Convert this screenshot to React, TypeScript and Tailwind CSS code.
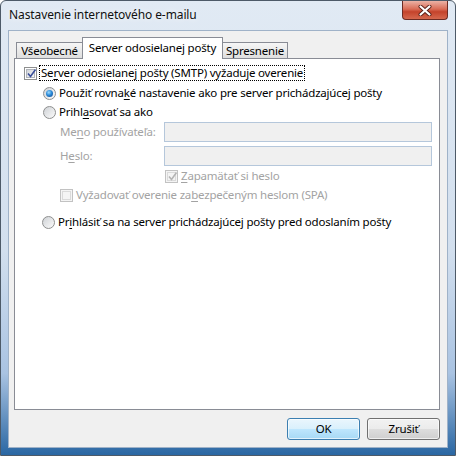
import React from "react";
import clsx from "clsx";

const Check = ({ checked = false, disabled = false }) => (
  <span
    className={clsx(
      "relative w-[13px] h-[13px] border flex items-center justify-center shrink-0",
      disabled ? "border-[#c2c2c2] bg-[#f4f4f4]" : "border-[#8e8f8f] bg-white"
    )}
  >
    <span
      className={clsx(
        "w-[9px] h-[9px] border",
        disabled
          ? "border-[#dadada] bg-[#f4f4f4]"
          : "border-[#b0b4ba] bg-[linear-gradient(135deg,#d2d5da,#f7f7f7)]"
      )}
    />
    {checked && (
      <svg className="absolute left-[1px] top-[0px]" width="11" height="11" viewBox="0 0 11 11">
        <path
          d="M2 5.5 L4.5 8.5 L9.5 1.5"
          fill="none"
          stroke={disabled ? "#b4b4b4" : "#3a4f9a"}
          strokeWidth="1.6"
        />
      </svg>
    )}
  </span>
);

const Radio = ({ checked = false }) => (
  <span className="w-[13px] h-[13px] rounded-full border border-[#8e8f8f] bg-[linear-gradient(135deg,#cfd2d6,#fbfbfb)] flex items-center justify-center shrink-0">
    {checked && (
      <span className="w-[7px] h-[7px] rounded-full bg-[radial-gradient(circle_at_40%_35%,#9fdcff_0%,#2b8ad8_45%,#0d3f86_100%)]" />
    )}
  </span>
);

const U = ({ children }) => <span className="underline underline-offset-[2px]">{children}</span>;

export default function App() {
  return (
    <div className="w-[456px] h-[456px] flex flex-col border border-[#4d5a68] rounded-t-[6px] bg-[linear-gradient(to_bottom,#e1eaf4_0%,#d2dfee_55%,#a9c3e2_82%,#2a67a3_100%)] font-['Noto_Sans',sans-serif] text-[11.5px] tracking-[-0.2px] text-black leading-none overflow-hidden">
      {/* title bar */}
      <div className="h-[29px] flex justify-between items-start pl-[8px] pr-[7px]">
        <div className="mt-[8px] text-[12px] tracking-[-0.1px] text-[#111] [text-shadow:0_0_6px_#ffffff]">
          Nastavenie internetového e-mailu
        </div>
        <div className="w-[46px] h-[19px] border border-t-0 border-[#6b2b23] rounded-b-[4px] bg-[linear-gradient(to_bottom,#ebb2a5_0%,#d96c56_45%,#c4432b_60%,#d5684e_100%)] flex items-center justify-center">
          <svg width="14" height="11" viewBox="0 0 14 11">
            <path d="M2.5 1.5 L11.5 9.5 M11.5 1.5 L2.5 9.5" stroke="#5a2018" strokeWidth="4" strokeLinecap="round" />
            <path d="M2.5 1.5 L11.5 9.5 M11.5 1.5 L2.5 9.5" stroke="#ffffff" strokeWidth="2.2" strokeLinecap="round" />
          </svg>
        </div>
      </div>

      {/* client area */}
      <div className="flex-1 mx-[7px] mb-[7px] border border-[#9fb2c8] bg-[#f0f0f0] flex flex-col pl-[5px] pt-[6px]">
        {/* tabs */}
        <div className="relative z-10 flex items-end h-[21px] pl-[2px]">
          <div className="w-[67px] h-[16px] border border-b-0 border-[#898c95] bg-[linear-gradient(to_bottom,#f6f6f6,#dedede)] flex items-center justify-center">
            Všeobecné
          </div>
          <div className="w-[141px] h-[22px] -mb-px -ml-px border border-b-0 border-[#898c95] bg-white flex items-center justify-center pb-[2px]">
            Server odosielanej pošty
          </div>
          <div className="w-[66px] h-[16px] -ml-px border border-b-0 border-[#898c95] bg-[linear-gradient(to_bottom,#f6f6f6,#dedede)] flex items-center justify-center">
            Spresnenie
          </div>
        </div>

        {/* panel */}
        <div className="w-[426px] h-[352px] border border-[#898c95] bg-white flex flex-col">
          <div className="mt-[6px] h-[16px] flex items-center pl-[9px]">
            <Check checked />
            <span className="ml-[2px] border border-dotted border-black px-[1px] py-[1px]">
              Se<U>r</U>ver odosielanej pošty (SMTP) vyžaduje overenie
            </span>
          </div>
          <div className="mt-[4px] h-[16px] flex items-center pl-[28px] gap-[3px]">
            <Radio checked />
            <span>
              Použiť rovna<U>k</U>é nastavenie ako pre server prichádzajúcej pošty
            </span>
          </div>
          <div className="mt-[3px] h-[16px] flex items-center pl-[28px] gap-[3px]">
            <Radio />
            <span>
              Prihl<U>a</U>sovať sa ako
            </span>
          </div>
          <div className="mt-[2px] h-[20px] flex items-center pl-[45px]">
            <span className="w-[104px] text-[#a3a3a3]">
              Me<U>n</U>o používateľa:
            </span>
            <div className="w-[268px] h-[20px] border border-[#b5c7db] bg-[#f0f0f0]" />
          </div>
          <div className="mt-[4px] h-[20px] flex items-center pl-[45px]">
            <span className="w-[104px] text-[#a3a3a3]">
              H<U>e</U>slo:
            </span>
            <div className="w-[268px] h-[20px] border border-[#b5c7db] bg-[#f0f0f0]" />
          </div>
          <div className="mt-[2px] h-[16px] flex items-center pl-[150px] gap-[3px] text-[#a3a3a3]">
            <Check checked disabled />
            <span>
              <U>Z</U>apamätať si heslo
            </span>
          </div>
          <div className="mt-[3px] h-[16px] flex items-center pl-[45px] gap-[3px] text-[#a3a3a3]">
            <Check disabled />
            <span>
              Vyžadovať overenie za<U>b</U>ezpečeným heslom (SPA)
            </span>
          </div>
          <div className="mt-[11px] h-[16px] flex items-center pl-[27px] gap-[3px]">
            <Radio />
            <span>
              Pr<U>i</U>hlásiť sa na server prichádzajúcej pošty pred odoslaním pošty
            </span>
          </div>
        </div>

        {/* buttons */}
        <div className="w-[426px] mt-[8px] flex justify-end gap-[7px]">
          <button className="w-[73px] h-[22px] rounded-[3px] border border-[#3c7fb1] bg-[linear-gradient(to_bottom,#eaf6fd_0%,#d9f0fc_50%,#bee6fd_51%,#a7d9f5_100%)] shadow-[inset_0_0_0_1px_#ffffffaa]">
            OK
          </button>
          <button className="w-[73px] h-[22px] rounded-[3px] border border-[#707070] bg-[linear-gradient(to_bottom,#f2f2f2_0%,#ebebeb_50%,#dddddd_51%,#cfcfcf_100%)] shadow-[inset_0_0_0_1px_#ffffffaa]">
            Zrušiť
          </button>
        </div>
      </div>
    </div>
  );
}
